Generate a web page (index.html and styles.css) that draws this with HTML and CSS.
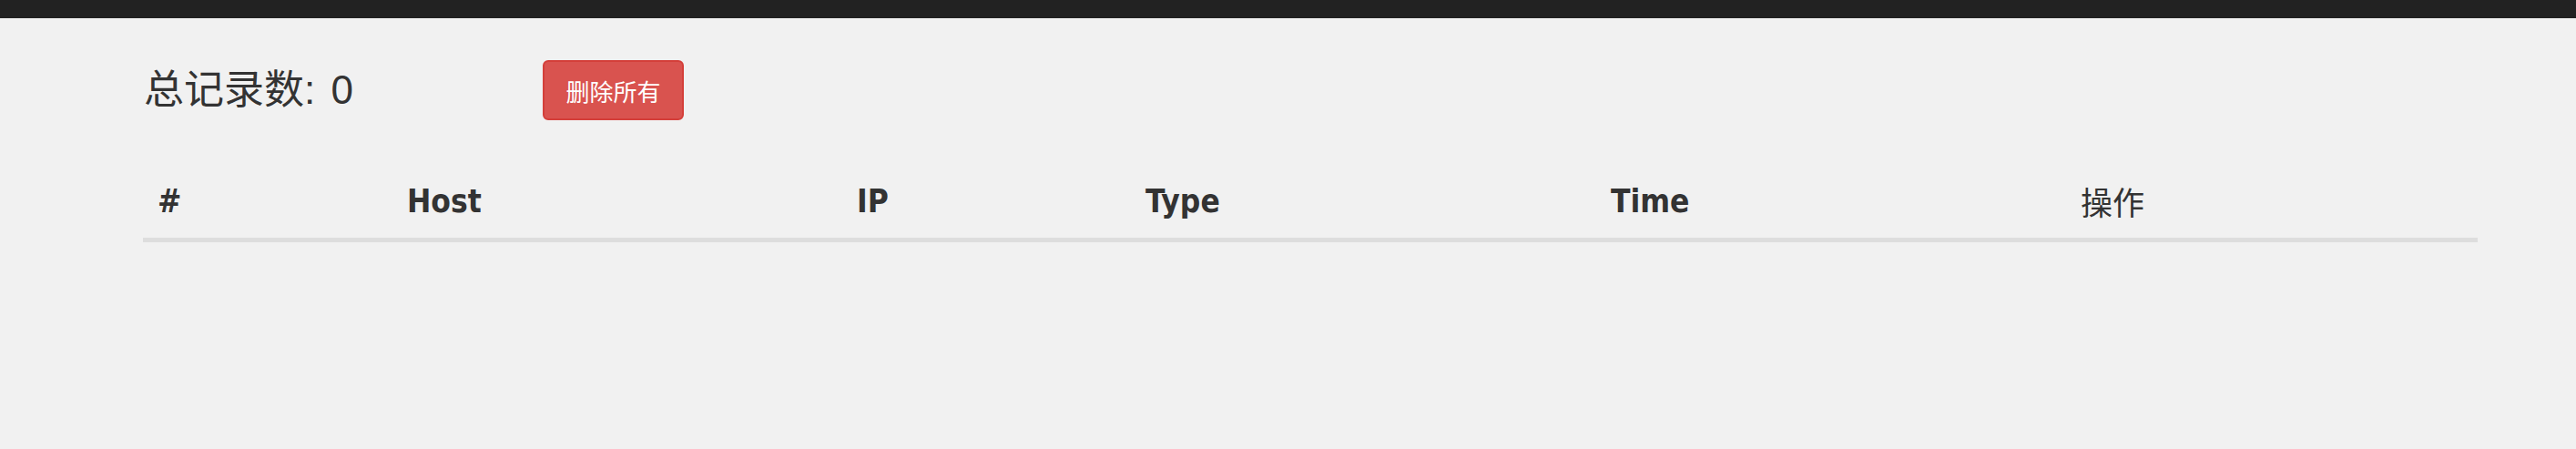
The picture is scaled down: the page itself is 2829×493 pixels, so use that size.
FILE: index.html
```html
<!DOCTYPE html>
<html lang="zh">
<head>
<meta charset="utf-8">
<title>Records</title>
<link rel="stylesheet" href="styles.css">
</head>
<body>
<div class="navbar"></div>
<div class="container">
  <div class="summary">
    <h3 class="count">总记录数: 0</h3>
    <button class="btn-danger" type="button">删除所有</button>
  </div>
  <table class="records">
    <colgroup>
      <col class="c1"><col class="c2"><col class="c3"><col class="c4"><col class="c5"><col class="c6">
    </colgroup>
    <thead>
      <tr>
        <th>#</th>
        <th>Host</th>
        <th>IP</th>
        <th>Type</th>
        <th>Time</th>
        <th class="cjk">操作</th>
      </tr>
    </thead>
    <tbody></tbody>
  </table>
</div>
</body>
</html>
```
FILE: styles.css
```css
html, body {
  margin: 0;
  padding: 0;
}
body {
  background: #f1f1f1;
  color: #333;
  font-family: "DejaVu Sans", "Noto Sans CJK SC", sans-serif;
}
.navbar {
  height: 20px;
  background: #222;
}
.container {
  width: 2564px;
  margin-left: 157px;
}
.summary {
  display: grid;
  grid-template-columns: 439px auto;
  align-items: center;
  margin-top: 46px;
  height: 66px;
}
.count {
  margin: 0 0 0 1px;
  font-family: "Liberation Sans", "Noto Sans CJK SC", sans-serif;
  font-weight: 400;
  font-size: 44px;
  word-spacing: 5px;
  line-height: 1;
  color: #333;
}
.btn-danger {
  justify-self: start;
  width: 155px;
  height: 66px;
  background: #d9534f;
  border: 2px solid #d43f3a;
  border-radius: 6px;
  color: #fff;
  font-family: "Noto Sans CJK SC", sans-serif;
  font-size: 26px;
  padding: 0;
}
.records {
  margin-top: 51px;
  width: 2564px;
  border-collapse: collapse;
  table-layout: fixed;
}
.c1 { width: 274px; }
.c2 { width: 494px; }
.c3 { width: 317px; }
.c4 { width: 511px; }
.c5 { width: 518px; }
.c6 { width: 450px; }
.records th {
  text-align: left;
  font-family: "DejaVu Sans Condensed", "DejaVu Sans", sans-serif;
  font-weight: bold;
  font-size: 35px;
  line-height: 50px;
  padding: 13px 14px 15px 16px;
  border-bottom: 5px solid #ddd;
  color: #333;
}
.records th.cjk {
  font-family: "Noto Sans CJK SC", sans-serif;
  font-weight: 400;
  padding-left: 14px;
}
```
